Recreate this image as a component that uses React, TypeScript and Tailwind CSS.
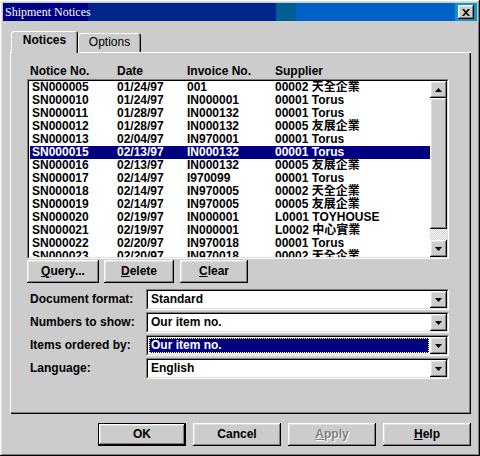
import React from "react";

const raised =
  "shadow-[inset_-1px_-1px_0_#000,inset_1px_1px_0_#fff,inset_-2px_-2px_0_#808080,inset_2px_2px_0_#dfdfdf]";

const notices = [
  ["SN000005", "01/24/97", "001", "00002 天全企業"],
  ["SN000010", "01/24/97", "IN000001", "00001 Torus"],
  ["SN000011", "01/28/97", "IN000132", "00001 Torus"],
  ["SN000012", "01/28/97", "IN000132", "00005 友展企業"],
  ["SN000013", "02/04/97", "IN970001", "00001 Torus"],
  ["SN000015", "02/13/97", "IN000132", "00001 Torus"],
  ["SN000016", "02/13/97", "IN000132", "00005 友展企業"],
  ["SN000017", "02/14/97", "I970099", "00001 Torus"],
  ["SN000018", "02/14/97", "IN970005", "00002 天全企業"],
  ["SN000019", "02/14/97", "IN970005", "00005 友展企業"],
  ["SN000020", "02/19/97", "IN000001", "L0001 TOYHOUSE"],
  ["SN000021", "02/19/97", "IN000001", "L0002 中心實業"],
  ["SN000022", "02/20/97", "IN970018", "00001 Torus"],
  ["SN000023", "02/20/97", "IN970018", "00002 天全企業"],
];

const fields = [
  { label: "Document format:", value: "Standard" },
  { label: "Numbers to show:", value: "Our item no." },
  { label: "Items ordered by:", value: "Our item no.", focused: true },
  { label: "Language:", value: "English" },
];

function Arrow({ up }: { up?: boolean }) {
  return (
    <svg width="7" height="4" viewBox="0 0 7 4">
      <polygon points={up ? "3.5,0 7,4 0,4" : "0,0 7,0 3.5,4"} fill="#000" />
    </svg>
  );
}

function Button({
  children,
  className = "",
}: {
  children: React.ReactNode;
  className?: string;
}) {
  return (
    <div
      className={`flex items-center justify-center bg-[#cccccc] ${raised} ${className}`}
    >
      {children}
    </div>
  );
}

function Combo({ value, focused }: { value: string; focused?: boolean }) {
  return (
    <div className="w-[303px] h-[21px] border border-t-[#808080] border-l-[#808080] border-b-white border-r-white">
      <div className="h-full flex border border-t-black border-l-black border-b-[#dfdfdf] border-r-[#dfdfdf] bg-white">
        {focused ? (
          <div className="flex-1 flex items-center m-[1px] bg-[#000080] border border-dotted border-[#ffff80] text-white pl-[1px]">
            {value}
          </div>
        ) : (
          <div className="flex-1 flex items-center pl-[3px]">{value}</div>
        )}
        <Button className="w-[17px] h-full">
          <Arrow />
        </Button>
      </div>
    </div>
  );
}

export default function App() {
  return (
    <div
      className={`w-[480px] h-[456px] bg-[#cccccc] p-[3px] flex flex-col text-[12px] leading-[13px] font-bold text-black ${raised}`}
      style={{ fontFamily: '"Liberation Sans", "Noto Sans CJK TC", sans-serif' }}
    >
      {/* title bar */}
      <div className="h-[18px] flex items-center justify-between pl-[2px] pr-[3px] bg-[linear-gradient(to_right,#000084_0px,#000084_85px,#00268e_85px,#00268e_273px,#005f92_273px,#005f92_293px,#0062c6_293px,#0062c6_452px,#0898cc_452px)]">
        <span
          className="text-white font-normal text-[12px]"
          style={{ fontFamily: '"Liberation Serif", serif' }}
        >
          Shipment Notices
        </span>
        <Button className="w-[16px] h-[14px]">
          <svg width="8" height="7" viewBox="0 0 8 7">
            <path d="M0 0h2l2 2.3 2-2.3h2L5 3.5 8 7H6L4 4.7 2 7H0l3-3.5z" fill="#000" />
          </svg>
        </Button>
      </div>

      {/* tabs */}
      <div className="mt-[10px] ml-[8px] flex items-end">
        <div className="relative z-10 w-[67px] h-[22px] -mb-[1px] rounded-t-[3px] bg-[#cccccc] flex items-center justify-center pb-[3px] shadow-[inset_1px_1px_0_#fff,inset_-1px_0_0_#000,inset_-2px_0_0_#808080]">
          Notices
        </div>
        <div className="w-[63px] h-[19px] rounded-t-[3px] flex items-center justify-center font-normal pb-[1px] shadow-[inset_1px_1px_0_#fff,inset_-1px_0_0_#000,inset_-2px_0_0_#808080]">
          Options
        </div>
      </div>

      {/* panel */}
      <div className="ml-[7px] w-[461px] h-[362px] pt-[13px] pl-[17px] flex flex-col shadow-[inset_1px_1px_0_#fff,inset_-1px_-1px_0_#000,inset_-2px_-2px_0_#808080]">
        <div className="h-[14px] flex">
          <div className="w-[90px] pl-[3px]">Notice No.</div>
          <div className="w-[70px]">Date</div>
          <div className="w-[88px]">Invoice No.</div>
          <div>Supplier</div>
        </div>

        {/* list box */}
        <div className="w-[422px] h-[180px] border border-t-[#808080] border-l-[#808080] border-b-white border-r-white">
          <div className="h-full flex border border-t-black border-l-black border-b-[#dfdfdf] border-r-[#dfdfdf] bg-white">
            <div className="flex-1 overflow-hidden">
              {notices.map((row, i) => (
                <div
                  key={row[0]}
                  className={`h-[13px] ml-[1px] flex whitespace-nowrap ${
                    i === 5 ? "bg-[#000080] text-white" : ""
                  }`}
                >
                  <div className="w-[87px] pl-[2px]">{row[0]}</div>
                  <div className="w-[70px]">{row[1]}</div>
                  <div className="w-[88px]">{row[2]}</div>
                  <div>{row[3]}</div>
                </div>
              ))}
            </div>
            <div className="w-[17px] flex flex-col bg-[#cccccc]">
              <Button className="h-[17px]">
                <Arrow up />
              </Button>
              <div className={`h-[131px] bg-[#cccccc] ${raised}`} />
              <div className="flex-1 bg-[image:repeating-conic-gradient(#fff_0_25%,#cccccc_0_50%)] bg-[length:2px_2px]" />
              <Button className="h-[17px]">
                <Arrow />
              </Button>
            </div>
          </div>
        </div>

        {/* list actions */}
        <div className="mt-[1px] h-[23px] flex">
          <Button className="w-[72px]">
            <span>
              <u>Q</u>uery...
            </span>
          </Button>
          <Button className="w-[70px] ml-[5px]">
            <span>
              <u>D</u>elete
            </span>
          </Button>
          <Button className="w-[68px] ml-[6px]">
            <span>
              <u>C</u>lear
            </span>
          </Button>
        </div>

        {/* options */}
        <div className="mt-[6px] flex flex-col gap-[2px]">
          {fields.map((f) => (
            <div key={f.label} className="flex items-center">
              <div className="w-[119px] pl-[3px]">{f.label}</div>
              <Combo value={f.value} focused={f.focused} />
            </div>
          ))}
        </div>
      </div>

      {/* dialog buttons */}
      <div className="mt-[9px] pr-[6px] flex justify-end gap-[7px]">
        <div className="w-[88px] h-[23px] border border-black flex">
          <Button className="flex-1">OK</Button>
        </div>
        <Button className="w-[88px] h-[23px]">Cancel</Button>
        <Button className="w-[88px] h-[23px] text-[#808080] [text-shadow:1px_1px_0_#fff]">
          <span>
            <u>A</u>pply
          </span>
        </Button>
        <Button className="w-[88px] h-[23px]">
          <span>
            <u>H</u>elp
          </span>
        </Button>
      </div>
    </div>
  );
}
